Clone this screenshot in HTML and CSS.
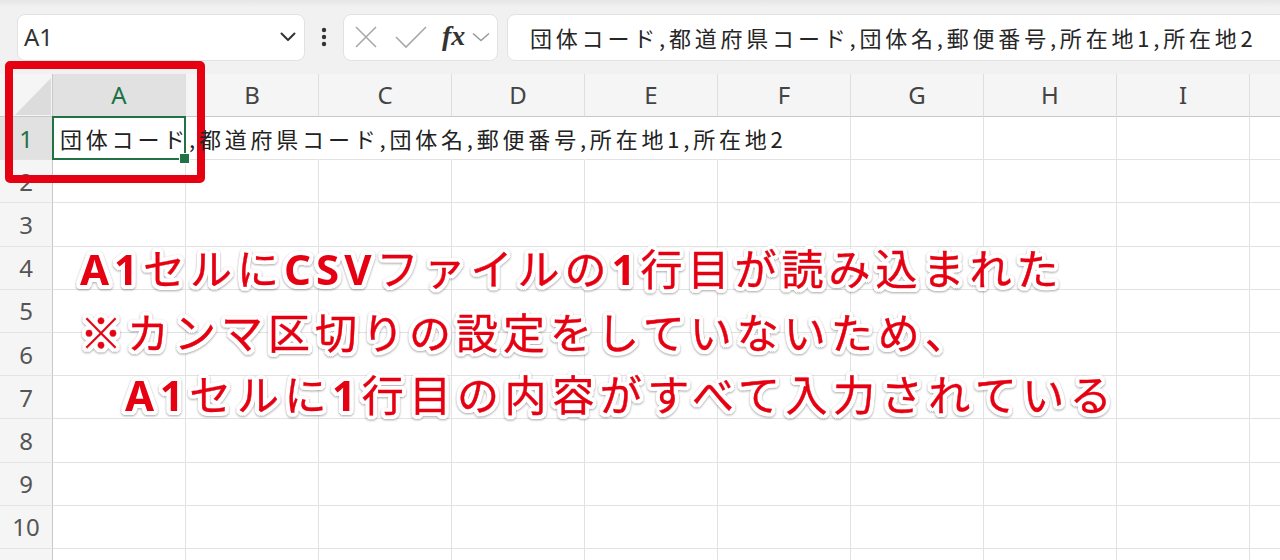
FILE: index.html
```html
<!DOCTYPE html>
<html lang="ja">
<head>
<meta charset="utf-8">
<title>Excel</title>
<link rel="stylesheet" href="styles.css">
</head>
<body>
<div class="app">
  <div class="toolbar">
    <div class="namebox">
      <span class="name">A1</span>
      <svg class="chev" width="16" height="10" viewBox="0 0 16 10"><path d="M1.5 1.5 L8 8 L14.5 1.5" fill="none" stroke="#333" stroke-width="2" stroke-linecap="round" stroke-linejoin="round"/></svg>
    </div>
    <div class="kebab">
      <svg width="6" height="20" viewBox="0 0 6 20"><circle cx="3" cy="3" r="2.2" fill="#333"/><circle cx="3" cy="10" r="2.2" fill="#333"/><circle cx="3" cy="17" r="2.2" fill="#333"/></svg>
    </div>
    <div class="fxbox">
      <svg class="ic-x" width="24" height="24" viewBox="0 0 24 24"><path d="M2 2 L22 22 M22 2 L2 22" stroke="#a8a8a8" stroke-width="1.6" fill="none"/></svg>
      <svg class="ic-ok" width="32" height="24" viewBox="0 0 32 24"><path d="M1 12 L11 22 L31 2" stroke="#a8a8a8" stroke-width="1.6" fill="none"/></svg>
      <span class="fx">fx</span>
      <svg class="chev-s" width="18" height="10" viewBox="0 0 18 10"><path d="M1 1.5 L9 8.5 L17 1.5" fill="none" stroke="#9a9a9a" stroke-width="1.5"/></svg>
    </div>
    <div class="formula">団体コード,都道府県コード,団体名,郵便番号,所在地1,所在地2</div>
  </div>

  <div class="grid">
    <div class="corner"><svg width="53" height="43" viewBox="0 0 53 43"><polygon points="15,41 51,4 51,41" fill="#dcdcdc"/></svg></div>
    <div class="ch sel">A</div><div class="ch">B</div><div class="ch">C</div><div class="ch">D</div><div class="ch">E</div><div class="ch">F</div><div class="ch">G</div><div class="ch">H</div><div class="ch">I</div><div class="ch"></div>

    <div class="rh sel">1</div>
    <div class="c a1"><span class="val">団体コード,都道府県コード,団体名,郵便番号,所在地1,所在地2</span></div>
    <div class="c ov"></div><div class="c ov"></div><div class="c ov"></div><div class="c ov"></div><div class="c"></div><div class="c"></div><div class="c"></div><div class="c"></div><div class="c"></div>

    <div class="rh">2</div><div class="c"></div><div class="c"></div><div class="c"></div><div class="c"></div><div class="c"></div><div class="c"></div><div class="c"></div><div class="c"></div><div class="c"></div><div class="c"></div>
    <div class="rh">3</div><div class="c"></div><div class="c"></div><div class="c"></div><div class="c"></div><div class="c"></div><div class="c"></div><div class="c"></div><div class="c"></div><div class="c"></div><div class="c"></div>
    <div class="rh">4</div><div class="c"></div><div class="c"></div><div class="c"></div><div class="c"></div><div class="c"></div><div class="c"></div><div class="c"></div><div class="c"></div><div class="c"></div><div class="c"></div>
    <div class="rh">5</div><div class="c"></div><div class="c"></div><div class="c"></div><div class="c"></div><div class="c"></div><div class="c"></div><div class="c"></div><div class="c"></div><div class="c"></div><div class="c"></div>
    <div class="rh">6</div><div class="c"></div><div class="c"></div><div class="c"></div><div class="c"></div><div class="c"></div><div class="c"></div><div class="c"></div><div class="c"></div><div class="c"></div><div class="c"></div>
    <div class="rh">7</div><div class="c"></div><div class="c"></div><div class="c"></div><div class="c"></div><div class="c"></div><div class="c"></div><div class="c"></div><div class="c"></div><div class="c"></div><div class="c"></div>
    <div class="rh">8</div><div class="c"></div><div class="c"></div><div class="c"></div><div class="c"></div><div class="c"></div><div class="c"></div><div class="c"></div><div class="c"></div><div class="c"></div><div class="c"></div>
    <div class="rh">9</div><div class="c"></div><div class="c"></div><div class="c"></div><div class="c"></div><div class="c"></div><div class="c"></div><div class="c"></div><div class="c"></div><div class="c"></div><div class="c"></div>
    <div class="rh">10</div><div class="c"></div><div class="c"></div><div class="c"></div><div class="c"></div><div class="c"></div><div class="c"></div><div class="c"></div><div class="c"></div><div class="c"></div><div class="c"></div>
    <div class="rh"></div><div class="c"></div><div class="c"></div><div class="c"></div><div class="c"></div><div class="c"></div><div class="c"></div><div class="c"></div><div class="c"></div><div class="c"></div><div class="c"></div>
  </div>

  <div class="redbox"></div>

  <div class="note">
    <div class="line"><span class="lat">A1</span>セルに<span class="lat">CSV</span>ファイルの<span class="lat">1</span>行目が読み込まれた</div>
    <div class="line">※カンマ区切りの設定をしていないため、</div>
    <div class="line indent"><span class="lat">A1</span>セルに<span class="lat">1</span>行目の内容がすべて入力されている</div>
  </div>
</div>
</body>
</html>
```

FILE: styles.css
```css
* { box-sizing: border-box; }

html, body {
  margin: 0;
  padding: 0;
  background: #ffffff;
}

body {
  font-family: "Noto Sans", "Noto Sans CJK JP", sans-serif;
  overflow: hidden;
}

.app {
  position: relative;
  width: 1280px;
  height: 560px;
  overflow: hidden;
}

/* ---------- toolbar ---------- */
.toolbar {
  height: 74px;
  display: flex;
  align-items: center;
  padding-left: 17px;
  background: linear-gradient(#e6e6e6 0, #f1f1f1 7px, #f1f1f1 100%);
  overflow: hidden;
}

.namebox,
.fxbox,
.formula {
  height: 47px;
  background: #ffffff;
  border: 1px solid #e2e2e2;
  border-radius: 8px;
  flex: none;
}

.namebox {
  width: 288px;
  display: flex;
  align-items: center;
  justify-content: space-between;
  padding: 0 8px 0 6px;
}

.name {
  font-family: "Noto Sans", sans-serif;
  font-size: 24px;
  color: #333333;
  line-height: 1;
}

.kebab {
  width: 38px;
  display: flex;
  justify-content: center;
  align-items: center;
  flex: none;
}

.fxbox {
  width: 155px;
  display: flex;
  align-items: center;
  padding-left: 10px;
}

.ic-x { margin-right: 17px; }
.ic-ok { margin-right: 15px; }

.fx {
  font-family: "Liberation Serif", "DejaVu Serif", serif;
  font-style: italic;
  font-weight: 700;
  font-size: 28px;
  color: #333333;
  line-height: 1;
  margin-right: 7px;
  margin-top: -2px;
}

.formula {
  width: 820px;
  margin-left: 9px;
  display: flex;
  align-items: center;
  padding-left: 22px;
  font-family: "Noto Sans CJK JP", sans-serif;
  font-size: 22px;
  letter-spacing: 3.8px;
  color: #262626;
  white-space: nowrap;
}

/* ---------- grid ---------- */
.grid {
  display: grid;
  grid-template-columns: 53px repeat(10, 133px);
  grid-template-rows: 43px repeat(11, 43.2px);
}

.corner {
  background: #f5f5f5;
  border-right: 1px solid #c8c8c8;
  border-bottom: 1px solid #c8c8c8;
}
.corner svg { display: block; }

.ch {
  background: #f5f5f5;
  border-right: 1px solid #dedede;
  border-bottom: 1px solid #c8c8c8;
  display: flex;
  align-items: center;
  justify-content: center;
  font-family: "Noto Sans", sans-serif;
  font-size: 24px;
  color: #444444;
  padding-bottom: 2px;
}
.ch.sel {
  background: #e1e1e1;
  color: #1e7145;
}

.rh {
  background: #f5f5f5;
  border-right: 1px solid #c8c8c8;
  border-bottom: 1px solid #e3e3e3;
  display: flex;
  align-items: center;
  justify-content: center;
  font-family: "Noto Sans", sans-serif;
  font-size: 24px;
  color: #555555;
}
.rh.sel {
  background: #e1e1e1;
  color: #1e7145;
}

.c {
  border-right: 1px solid #e2e2e2;
  border-bottom: 1px solid #e2e2e2;
}
.c.ov { border-right-color: transparent; }

.a1 {
  position: relative;
  z-index: 2;
  display: flex;
  align-items: center;
  padding-left: 7px;
  white-space: nowrap;
}

.a1 .val {
  font-family: "Noto Sans CJK JP", sans-serif;
  font-size: 22px;
  letter-spacing: 3.8px;
  color: #222222;
}

.a1::after {
  content: "";
  position: absolute;
  left: -1px;
  top: -1px;
  right: -1px;
  bottom: -1px;
  border: 2px solid #217346;
}

.a1::before {
  content: "";
  position: absolute;
  right: -5px;
  bottom: -5px;
  width: 9px;
  height: 9px;
  background: #217346;
  border: 1px solid #ffffff;
  z-index: 1;
}

/* ---------- annotations ---------- */
.redbox {
  position: absolute;
  left: 5px;
  top: 61px;
  width: 200px;
  height: 122px;
  border: 8px solid #e50012;
  border-radius: 5px;
}

.note {
  position: absolute;
  left: 80px;
  top: 236px;
  font-family: "Noto Sans CJK JP", sans-serif;
  font-weight: 400;
  font-size: 42px;
  line-height: 62px;
  letter-spacing: 5px;
  color: #e50012;
  white-space: nowrap;
  -webkit-text-stroke: 0.4px #e50012;
  text-shadow:
    4px 0 #fff, -4px 0 #fff, 0 4px #fff, 0 -4px #fff,
    3px 3px #fff, -3px 3px #fff, 3px -3px #fff, -3px -3px #fff,
    2px 4px #fff, -2px 4px #fff, 2px -4px #fff, -2px -4px #fff,
    4px 2px #fff, -4px 2px #fff, 4px -2px #fff, -4px -2px #fff;
  filter: drop-shadow(0 1px 1px rgba(0, 0, 0, 0.35));
}

.note .lat {
  font-family: "Noto Sans", sans-serif;
  font-weight: 700;
  -webkit-text-stroke: 0;
}

.note .indent {
  padding-left: 45px;
  letter-spacing: 5.6px;
}
```
